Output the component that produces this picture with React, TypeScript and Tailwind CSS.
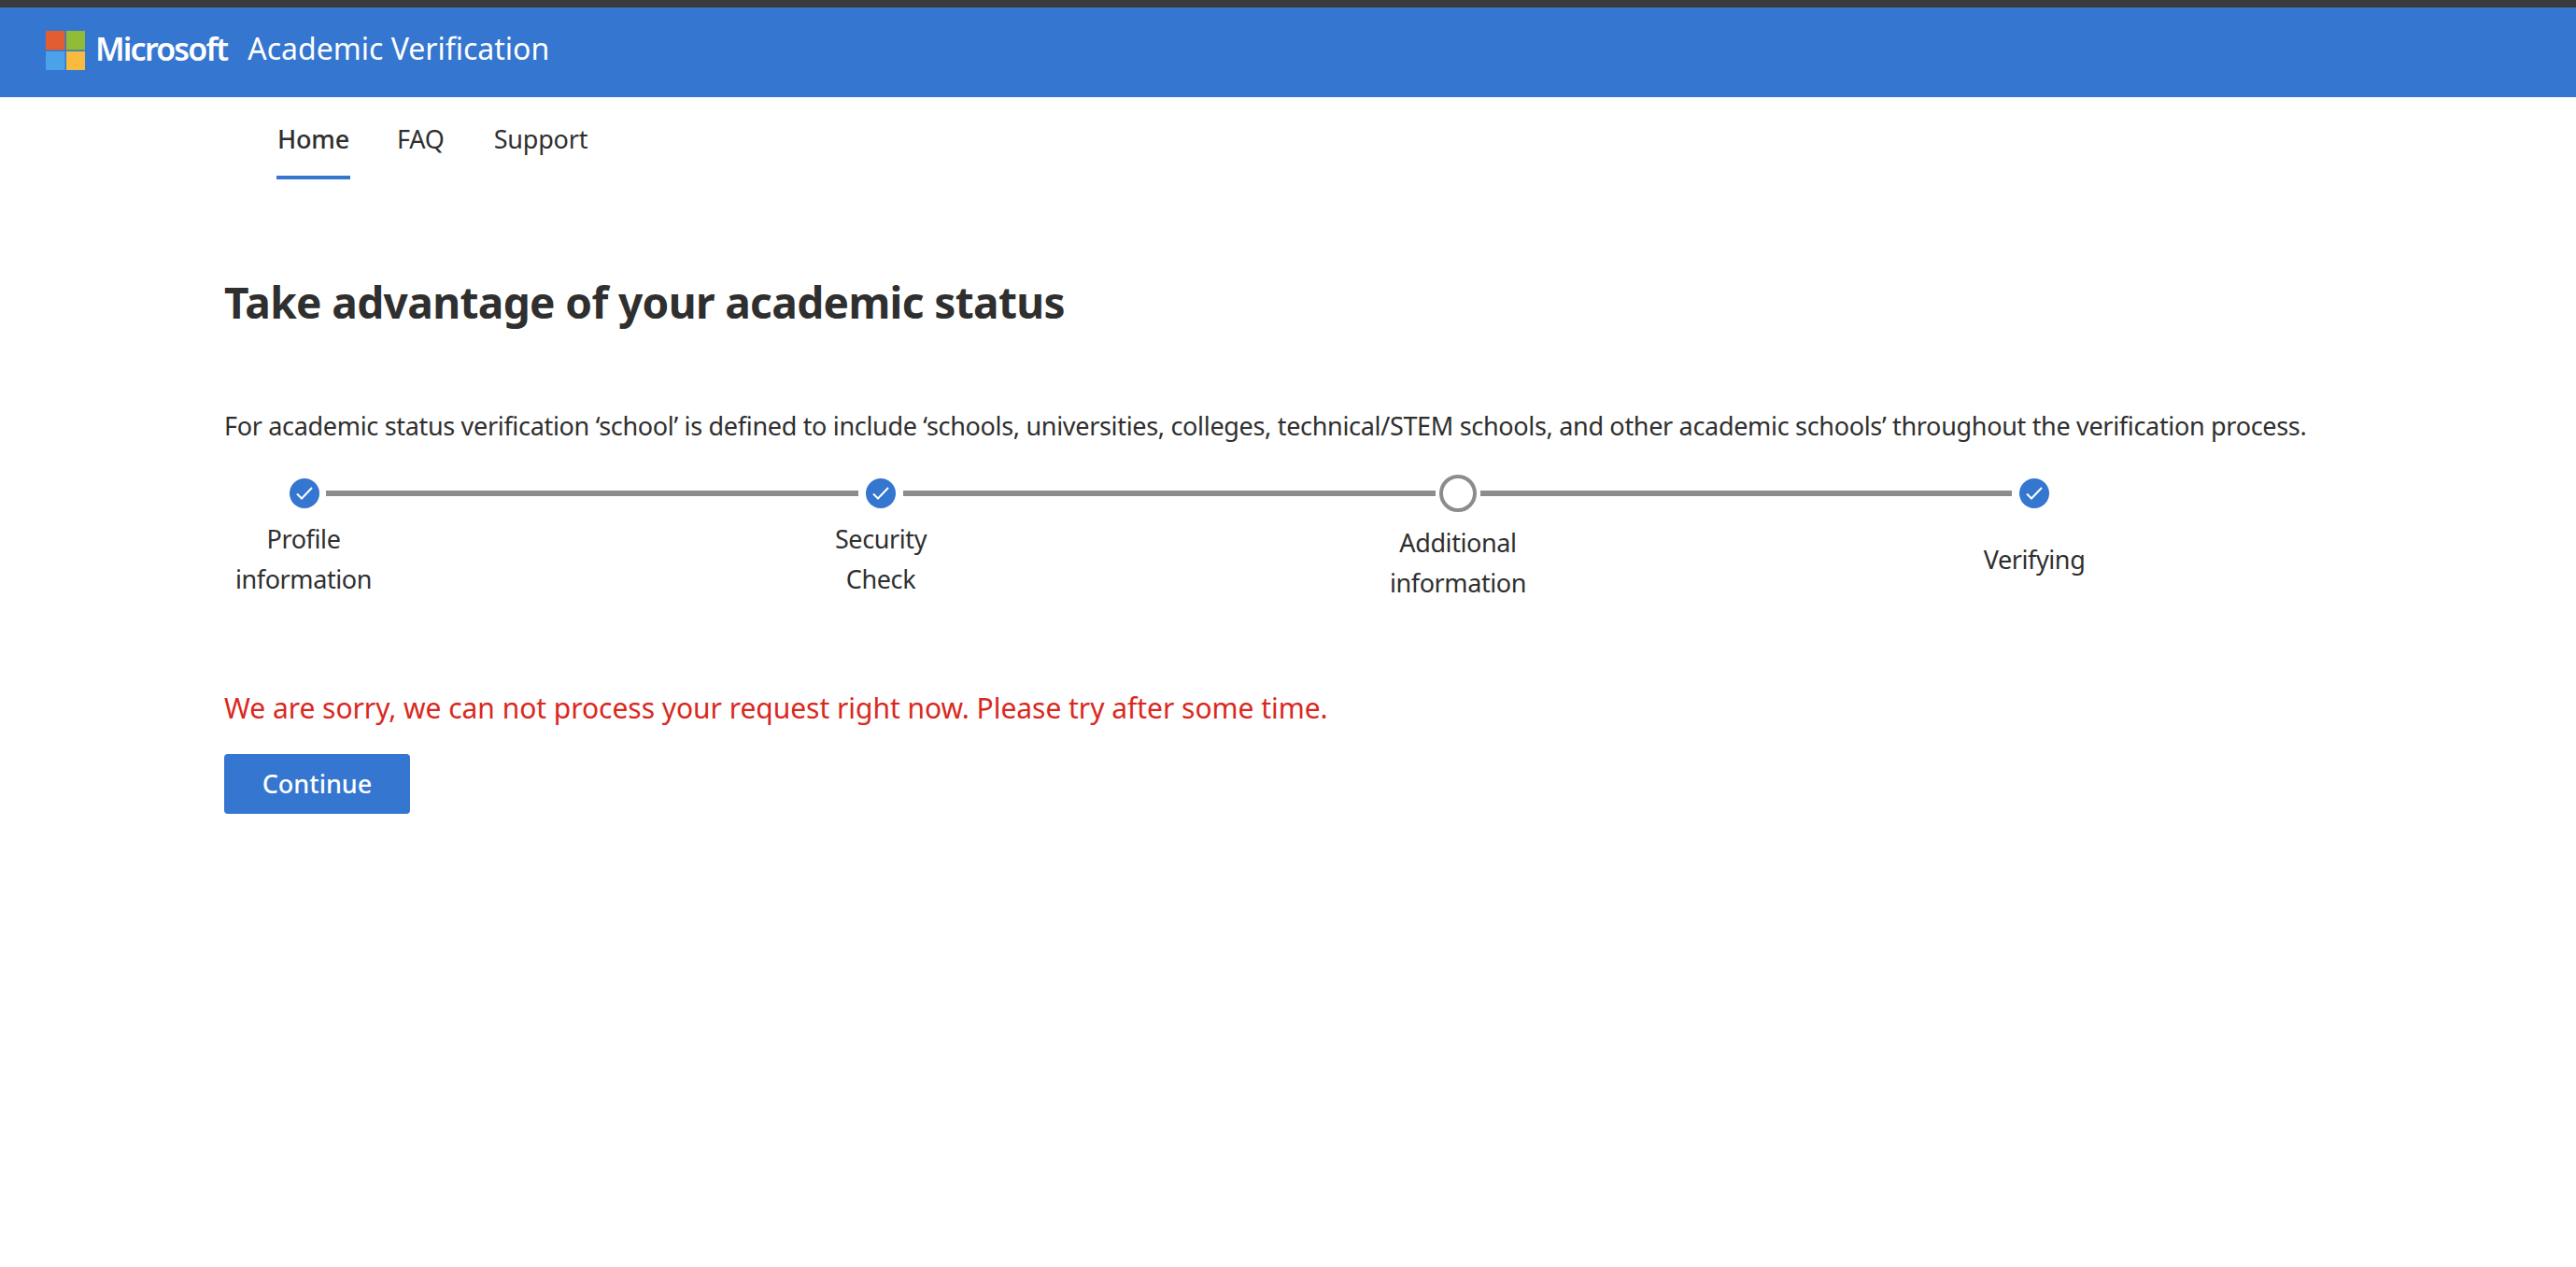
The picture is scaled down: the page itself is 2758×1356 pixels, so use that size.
const font = "font-['Noto_Sans','Open_Sans',sans-serif]";

function Check() {
  return (
    <div className="w-8 h-8 rounded-full bg-[#3476d0] flex items-center justify-center shrink-0">
      <svg width="20" height="16" viewBox="0 0 20 16" fill="none">
        <path d="M2 8.5 L7 13.5 L18 2" stroke="#fff" strokeWidth="2" />
      </svg>
    </div>
  );
}

function Line({ w }: { w: string }) {
  return <div className={`h-[6px] bg-[#8c8c8c] shrink-0 ${w}`} />;
}

export default function App() {
  return (
    <div className={`${font} min-h-[1356px] bg-white text-[#2f2f2f]`}>
      <div className="h-[8px] bg-[#3a3a3a]" />
      <header className="h-[96px] bg-[#3476d0] flex items-center pl-[49px] pb-[8px] text-white">
        <svg width="42" height="42" viewBox="0 0 42 42" className="shrink-0 mt-[4px]">
          <rect x="0" y="0" width="20.5" height="20.5" fill="#e35d33" />
          <rect x="22" y="0" width="20" height="20.5" fill="#8fbb37" />
          <rect x="0" y="22" width="20.5" height="20" fill="#4ba1ea" />
          <rect x="22" y="22" width="20" height="20" fill="#f8bb40" />
        </svg>
        <span className="ml-[11px] text-[34px] font-semibold tracking-[-1.8px] leading-none">Microsoft</span>
        <span className="ml-[22px] text-[32px] leading-none">Academic Verification</span>
      </header>
      <nav className="h-[88px] flex pl-[296px] text-[27px] tracking-[-0.2px]">
        <div className="w-[79px] h-full border-b-4 border-[#3476d0] font-medium flex justify-center pt-[26px] leading-[38px]">Home</div>
        <div className="ml-[50px] pt-[26px] leading-[38px]">FAQ</div>
        <div className="ml-[53px] pt-[26px] leading-[38px]">Support</div>
      </nav>
      <main className="pl-[240px]">
        <h1 className="mt-[99px] text-[46px] leading-[64px] font-bold tracking-[-0.63px]">Take advantage of your academic status</h1>
        <p className="mt-[82px] text-[27px] leading-[38px] tracking-[-0.32px] whitespace-nowrap">
          For academic status verification ‘school’ is defined to include ‘schools, universities, colleges, technical/STEM schools, and other academic schools’ throughout the verification process.
        </p>
        <div className="mt-[33px] flex items-center h-[40px] pl-[70px]">
          <Check />
          <div className="w-[7px]" />
          <Line w="w-[570px]" />
          <div className="w-[8px]" />
          <Check />
          <div className="w-[8px]" />
          <Line w="w-[570px]" />
          <div className="w-[4px]" />
          <div className="w-10 h-10 rounded-full border-4 border-[#8c8c8c] shrink-0" />
          <div className="w-[4px]" />
          <Line w="w-[569px]" />
          <div className="w-[8px]" />
          <Check />
        </div>
        <div className="flex text-[27px] leading-[43px] tracking-[-0.4px] text-center">
          <div className="w-[170px] mt-[7px]">Profile<br />information</div>
          <div className="w-[170px] ml-[448px] mt-[7px]">Security<br />Check</div>
          <div className="w-[170px] ml-[448px] mt-[11px]">Additional<br />information</div>
          <div className="w-[170px] ml-[447px] mt-[29px]">Verifying</div>
        </div>
        <p className="mt-[93px] text-[30px] leading-[40px] tracking-[-0.04px] text-[#d9281e] whitespace-nowrap">We are sorry, we can not process your request right now. Please try after some time.</p>
        <button className="mt-[29px] block w-[199px] h-[64px] rounded-[4px] bg-[#3476d0] text-white text-[27px] font-medium">Continue</button>
      </main>
    </div>
  );
}
